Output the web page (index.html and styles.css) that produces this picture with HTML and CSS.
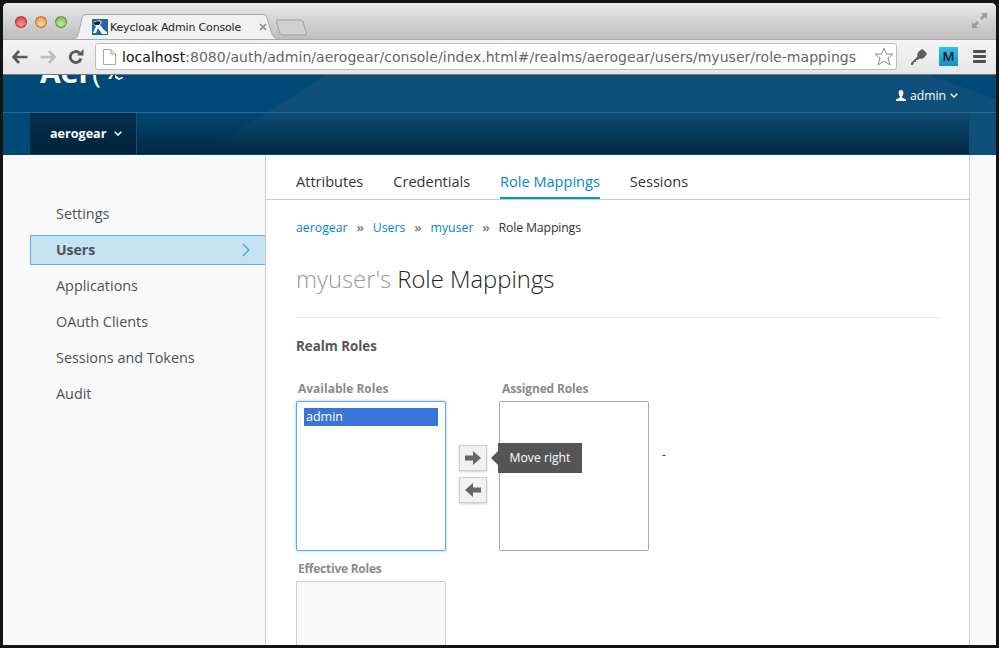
FILE: index.html
```html
<!DOCTYPE html>
<html lang="en">
<head>
    <meta charset="UTF-8">
    <title>Keycloak Admin Console</title>
    <link rel="stylesheet" href="styles.css">
</head>
<body>
<div class="window">
    <div class="tabstrip">
        <div class="lights">
            <span class="light red"></span>
            <span class="light yellow"></span>
            <span class="light green"></span>
        </div>
        <div class="tab">
            <svg class="tab-shape" width="208" height="26" viewBox="0 0 208 26"><path d="M0 25.5C6 25 6 21 8 13L10 4C11 1 12 .5 15 .5H190C193 .5 194 1 195 4L199 17C200 22 203 25 208 25.5Z" fill="#f1f1f1" stroke="#a9a9a9"/></svg>
            <svg class="favicon" width="16" height="16" viewBox="0 0 16 16"><rect width="16" height="16" fill="#1f6a98"/><path d="M1 4C4 1 8 1 10 3L8 6 12 11 15 13V15H10L6 9 4 14H1L4 7 2 6Z" fill="#fff"/><path d="M1 4C4 2 7 2 9 3L7 6H3Z" fill="#123"/></svg>
            <span class="tab-title">Keycloak Admin Console</span>
            <svg class="tab-close" width="8" height="8" viewBox="0 0 8 8"><path d="M1 1L7 7M7 1L1 7" stroke="#8c8c8c" stroke-width="1.6"/></svg>
        </div>
        <svg class="new-tab" width="32" height="17" viewBox="0 0 32 17"><path d="M1 1H24C26 1 27 2 27.500 4L30 13C31 15 30 16 28 16H7C5 16 4 15 3.500 13L.5 3C.5 2 0 1 1 1Z" fill="#d0d0d0" stroke="#9c9c9c"/></svg>
        <svg class="expand" width="15" height="15" viewBox="0 0 15 15"><path d="M9 0H15V6L13 4 10 7 8 5 11 2ZM0 9L2 11 5 8 7 10 4 13 6 15H0Z" fill="#9b9b9b"/></svg>
    </div>
    <div class="toolbar">
        <svg class="tool" width="16" height="14" viewBox="0 0 16 14"><path d="M7 1L1.500 7 7 13M2 7H15.500" fill="none" stroke="#5a5a5a" stroke-width="2.600"/></svg>
        <svg class="tool" width="16" height="14" viewBox="0 0 16 14"><path d="M9 1L14.500 7 9 13M14 7H.5" fill="none" stroke="#bdbdbd" stroke-width="2.600"/></svg>
        <svg class="tool" width="16" height="16" viewBox="0 0 16 16"><path d="M13 9.500A5.500 5.500 0 1 1 11.500 4" fill="none" stroke="#5a5a5a" stroke-width="2.800"/><path d="M9 6.500H15.500V0Z" fill="#5a5a5a"/></svg>
        <div class="omnibox">
            <svg class="page-icon" width="13" height="16" viewBox="0 0 13 16"><path d="M.5.5H8L12.500 5V15.500H.5Z" fill="#fff" stroke="#a8a8a8"/><path d="M8 .5V5H12.500" fill="#e4e4e4" stroke="#a8a8a8"/></svg>
            <span class="url"><span class="host">localhost</span>:8080/auth/admin/aerogear/console/index.html#/realms/aerogear/users/myuser/role-mappings</span>
            <svg class="star" width="20" height="19" viewBox="0 0 20 19"><path d="M10 1L12.500 7H19L14 11 16 18 10 14 4 18 6 11 1 7H7.500Z" fill="#fff" stroke="#8a8a8a"/></svg>
        </div>
        <svg class="key" width="18" height="18" viewBox="0 0 18 18"><path d="M1 15L7.500 8.500C6.500 6 8 4 10 2.500L12.500 1 17 5.500 15.500 8C14 10 12 11.500 9.500 10.500L8 12H6V14H4L3 17H1Z" fill="#5f5f5f"/></svg>
        <span class="ext-m">M</span>
        <span class="menu-bars"><i></i><i></i><i></i></span>
    </div>
    <div class="header">
        <div class="top-row">
            <div class="brand">Aer<span class="brand-swoosh">(</span><svg class="brand-mark" width="15" height="5" viewBox="0 0 15 5"><path d="M0 4L3 0H5L3 4ZM7 0L11 3 15 2V3L11 5 7 3Z" fill="#fff"/></svg></div>
            <div class="user-menu">
                <svg width="10" height="11" viewBox="0 0 10 11"><path d="M5 0C7 0 7.500 1.500 7.300 3.500 7.100 5 6.500 6 6 6.500V7.500L10 9.500V11H0V9.500L4 7.500V6.500C3.500 6 2.900 5 2.700 3.500 2.500 1.500 3 0 5 0Z" fill="#fff"/></svg>
                <span>admin</span>
                <svg width="8" height="5" viewBox="0 0 8 5"><path d="M.7.7L4 4 7.300.7" fill="none" stroke="#fff" stroke-width="1.300"/></svg>
            </div>
        </div>
        <div class="navbar">
            <div class="realm">
                <span>aerogear</span>
                <svg width="8" height="5" viewBox="0 0 8 5"><path d="M.7.7L4 4 7.300.7" fill="none" stroke="#fff" stroke-width="1.500"/></svg>
            </div>
        </div>
    </div>
    <div class="main">
        <ul class="sidebar">
            <li>Settings</li>
            <li class="active">Users
                <svg width="8" height="14" viewBox="0 0 8 14"><path d="M1 1L7 7 1 13" fill="none" stroke="#3aa3dc" stroke-width="1.200"/></svg>
            </li>
            <li>Applications</li>
            <li>OAuth Clients</li>
            <li>Sessions and Tokens</li>
            <li>Audit</li>
        </ul>
        <div class="content">
            <ul class="tabs">
                <li>Attributes</li>
                <li>Credentials</li>
                <li class="selected">Role Mappings</li>
                <li>Sessions</li>
            </ul>
            <div class="page">
                <ol class="crumbs">
                    <li><a href="#">aerogear</a></li>
                    <li><a href="#">Users</a></li>
                    <li><a href="#">myuser</a></li>
                    <li class="current">Role Mappings</li>
                </ol>
                <h1><span class="muted">myuser's</span> Role Mappings</h1>
                <hr>
                <h2>Realm Roles</h2>
                <div class="roles">
                    <div class="role-col">
                        <label>Available Roles</label>
                        <div class="role-box focus"><div class="option">admin</div></div>
                    </div>
                    <div class="move-col">
                        <div class="move-btn">
                            <svg width="16" height="14" viewBox="0 0 16 14"><path d="M0 4.500H8V0L16 7 8 14V9.500H0Z" fill="#666"/></svg>
                            <div class="tooltip">Move right</div>
                        </div>
                        <div class="move-btn">
                            <svg width="16" height="14" viewBox="0 0 16 14"><path d="M16 4.500H8V0L0 7 8 14V9.500H16Z" fill="#666"/></svg>
                        </div>
                    </div>
                    <div class="role-col">
                        <label class="assigned">Assigned Roles</label>
                        <div class="role-box"></div>
                    </div>
                    <div class="dash">-</div>
                </div>
                <div class="role-col">
                    <label class="effective">Effective Roles</label>
                    <div class="role-box readonly"></div>
                </div>
            </div>
        </div>
    </div>
</div>
</body>
</html>
```

FILE: styles.css
```css
* {
    margin: 0;
    padding: 0;
    box-sizing: border-box;
}

ul, ol {
    list-style: none;
}

a {
    color: #0088ce;
    text-decoration: none;
}

body {
    width: 999px;
    height: 648px;
    padding: 3px;
    background: #141414;
    font-family: "Open Sans", sans-serif;
    overflow: hidden;
}

.window {
    width: 993px;
    height: 642px;
    overflow: hidden;
    border-radius: 5px 5px 0 0;
    background: #fff;
    display: flex;
    flex-direction: column;
}

/* browser chrome */
.tabstrip {
    height: 36px;
    flex: none;
    position: relative;
    z-index: 1;
    display: flex;
    align-items: flex-end;
    background: linear-gradient(#e9e9e9, #bdbdbd);
}

.lights {
    display: flex;
    gap: 8px;
    padding: 0 0 11px 12px;
}

.light {
    width: 12px;
    height: 12px;
    border-radius: 50%;
    border: 1px solid rgba(0, 0, 0, .3);
}

.red {
    background: radial-gradient(circle at 50% 70%, #ff9a96, #d8302e);
}

.yellow {
    background: radial-gradient(circle at 50% 70%, #ffd89a, #e0902c);
}

.green {
    background: radial-gradient(circle at 50% 70%, #c4eca0, #6fae45);
}

.tab {
    width: 208px;
    height: 26px;
    margin: 0 0 -1px 5px;
    position: relative;
    display: flex;
    align-items: center;
    padding-left: 20px;
}

.tab-shape {
    position: absolute;
    left: 0;
    top: 0;
}

.favicon, .tab-title, .tab-close {
    position: relative;
}

.tab-title {
    margin-left: 2px;
    font-family: "DejaVu Sans", sans-serif;
    font-size: 11px;
    letter-spacing: -.16px;
    color: #222;
}

.tab-close {
    margin-left: 18px;
}

.new-tab {
    margin: 0 0 3px -4px;
}

.expand {
    margin: 0 9px 11px auto;
}

.toolbar {
    height: 36px;
    flex: none;
    display: flex;
    align-items: center;
    padding: 0 0 1px 9px;
    background: linear-gradient(#f4f4f4, #e6e6e6);
    border-top: 1px solid #a8a8a8;
    border-bottom: 1px solid #777;
}

.tool {
    margin-right: 12px;
}

.omnibox {
    width: 802px;
    height: 27px;
    margin-left: -1px;
    display: flex;
    align-items: center;
    padding: 0 2px 0 7px;
    background: #fff;
    border: 1px solid #bcbcbc;
    border-radius: 3px;
}

.url {
    margin-left: 6px;
    font-family: "DejaVu Sans", sans-serif;
    font-size: 14px;
    letter-spacing: .04px;
    color: #666;
    white-space: nowrap;
}

.host {
    color: #111;
}

.star {
    margin-left: auto;
}

.key {
    margin-left: 13px;
}

.ext-m {
    width: 19px;
    height: 19px;
    margin-left: 11px;
    background: linear-gradient(#2ec0ee, #1a8fc0);
    color: #111;
    font-size: 13px;
    font-weight: 600;
    line-height: 19px;
    text-align: center;
}

.menu-bars {
    width: 13px;
    margin-left: 15px;
    display: flex;
    flex-direction: column;
    gap: 2px;
}

.menu-bars i {
    height: 3px;
    background: #4f4f4f;
    border-radius: 1px;
}

/* app header */
.header {
    height: 80px;
    flex: none;
    position: relative;
    overflow: hidden;
    background: #004a78;
    color: #fff;
}

.header::before {
    content: "";
    position: absolute;
    inset: 0;
    background: #0f4f7a;
    clip-path: polygon(197px 80px, 323px 0, 993px 0, 993px 80px);
}

.header::after {
    content: "";
    position: absolute;
    inset: 0;
    background: #004a78;
    clip-path: polygon(925px 0, 993px 0, 993px 24px);
}

.top-row {
    height: 37px;
    position: relative;
    z-index: 1;
    display: flex;
    justify-content: space-between;
    padding: 0 38px 0 37px;
}

.brand {
    margin-top: -14px;
    font-size: 30px;
    font-weight: 700;
    line-height: 22px;
    display: flex;
}

.brand-swoosh {
    font-weight: 400;
}

.brand-mark {
    margin: 14px 0 0 7px;
}

.user-menu {
    display: flex;
    align-items: center;
    padding-top: 3px;
    gap: 4px;
    font-size: 12.200px;
}

.navbar {
    height: 43px;
    position: relative;
    z-index: 1;
    padding: 0 27px;
    border-top: 1px solid #31688e;
}

.navbar::before {
    content: "";
    position: absolute;
    left: 27px;
    top: 0;
    width: 939px;
    height: 41px;
    background: linear-gradient(rgba(0, 60, 100, .2), rgba(2, 40, 66, 1));
}

.realm {
    width: 107px;
    height: 41px;
    position: relative;
    display: flex;
    align-items: center;
    gap: 8px;
    padding-left: 20px;
    background: linear-gradient(#03304f, #01233b);
    border-right: 1px solid #1d4c6c;
    font-size: 12.600px;
    font-weight: 700;
}

/* main area */
.main {
    flex: 1;
    min-height: 0;
    display: grid;
    grid-template-columns: 262px 705px 1fr;
    background: #f9f9f9;
}

.sidebar {
    padding: 41px 0 0 27px;
    font-size: 14.400px;
    color: #4d5258;
}

.sidebar li {
    height: 36px;
    line-height: 36px;
    padding-left: 26px;
}

.sidebar .active {
    height: 30px;
    margin: 3px 0;
    line-height: 28px;
    padding: 0 15px 0 25px;
    display: flex;
    align-items: center;
    justify-content: space-between;
    background: #c5e3f0;
    border: 1px solid #4db5e5;
    border-right: 0;
    font-size: 14px;
    font-weight: 700;
}

.content {
    background: #fff;
    border-left: 1px solid #ccc;
    border-right: 1px solid #ccc;
}

.tabs {
    height: 45px;
    display: flex;
    gap: 30px;
    padding-left: 30px;
    border-bottom: 1px solid #ccc;
    font-size: 14.550px;
    color: #333;
}

.tabs li {
    height: 44px;
    padding-top: 16px;
    line-height: 20px;
}

.tabs .selected {
    color: #0088ce;
    border-bottom: 2px solid #0099d3;
}

.page {
    padding: 18px 30px 0;
}

.crumbs {
    display: flex;
    font-size: 12.300px;
    line-height: 20px;
    color: #333;
}

.crumbs li + li::before {
    content: "\00BB";
    margin: 0 8.800px;
    color: #888;
    font-weight: 700;
}

.crumbs .current {
    letter-spacing: -.15px;
}

h1 {
    margin-top: 24px;
    font-size: 23.800px;
    font-weight: 300;
    line-height: 34px;
    color: #222;
}

.muted {
    color: #999;
}

hr {
    margin-top: 21px;
    border: 0;
    border-top: 1px solid #e5e5e5;
}

h2 {
    margin-top: 19px;
    font-size: 13.300px;
    font-weight: 700;
    line-height: 18px;
    color: #555;
}

.roles {
    display: flex;
    margin-top: 25px;
}

.role-col {
    width: 150px;
}

label {
    display: block;
    height: 18px;
    margin-bottom: 3px;
    padding-left: 2px;
    font-size: 12px;
    font-weight: 700;
    line-height: 18px;
    color: #8b8b8b;
}

.role-col .assigned {
    padding-left: 3px;
    letter-spacing: -.15px;
}

.role-col .effective {
    letter-spacing: -.25px;
}

.role-box {
    height: 150px;
    background: #fff;
    border: 1px solid #aaa;
    border-radius: 2px;
}

.role-box.focus {
    padding: 6px 7px;
    border-color: #5ca9e6;
    box-shadow: 0 0 3px rgba(82, 168, 236, .6);
}

.role-box.readonly {
    background: #f8f8f8;
    border-color: #ccc;
}

.option {
    height: 18px;
    padding-left: 2px;
    background: #3875d7;
    color: #fff;
    font-size: 12.500px;
    line-height: 17px;
}

.move-col {
    width: 28px;
    margin: 0 12px 0 13px;
    padding-top: 65px;
    display: flex;
    flex-direction: column;
    gap: 6px;
}

.move-btn {
    height: 26px;
    position: relative;
    display: flex;
    align-items: center;
    justify-content: center;
    background: #f1f1f1;
    border: 1px solid #ccc;
    box-shadow: 0 1px 2px rgba(0, 0, 0, .2);
}

.tooltip {
    position: absolute;
    left: 38px;
    top: -3px;
    width: 84px;
    height: 30px;
    background: #555;
    color: #fff;
    font-size: 12.200px;
    line-height: 30px;
    text-align: center;
    z-index: 2;
}

.tooltip::before {
    content: "";
    position: absolute;
    left: -7px;
    top: 8px;
    border-top: 7px solid transparent;
    border-bottom: 7px solid transparent;
    border-right: 7px solid #555;
}

.dash {
    margin: 66px 0 0 13px;
    font-size: 12px;
    line-height: 18px;
    color: #333;
}

.roles + .role-col {
    margin-top: 9px;
}
```
